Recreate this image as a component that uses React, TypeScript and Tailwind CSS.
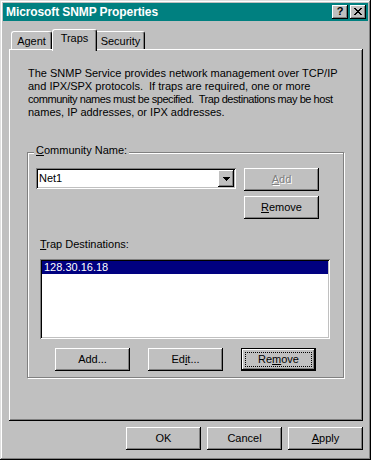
import React from "react";

const raised =
  "bg-[#c0c0c0] shadow-[inset_-1px_-1px_#000,inset_1px_1px_#fff,inset_-2px_-2px_#808080]";
const sunken =
  "bg-white shadow-[inset_1px_1px_#808080,inset_-1px_-1px_#fff,inset_2px_2px_#000,inset_-2px_-2px_#c0c0c0]";

function Btn({
  children,
  disabled,
  isDefault,
  className = "",
}: {
  children: React.ReactNode;
  disabled?: boolean;
  isDefault?: boolean;
  className?: string;
}) {
  if (isDefault) {
    return (
      <div
        className={`w-[75px] h-[23px] border border-black bg-[#c0c0c0] shadow-[inset_-1px_-1px_#000,inset_1px_1px_#fff,inset_-2px_-2px_#808080] p-[3px] ${className}`}
      >
        <div className="w-full h-full border border-dotted border-black flex items-center justify-center leading-none">
          {children}
        </div>
      </div>
    );
  }
  return (
    <div
      className={`w-[75px] h-[23px] ${raised} flex items-center justify-center leading-none ${
        disabled ? "text-[#808080] [text-shadow:1px_1px_#fff]" : "text-black"
      } ${className}`}
    >
      {children}
    </div>
  );
}

export default function App() {
  return (
    <div className="w-[371px] h-[460px] bg-[#c0c0c0] p-[3px] flex flex-col text-[11px] text-black font-['Liberation_Sans',Arial,sans-serif] shadow-[inset_-1px_-1px_#000,inset_1px_1px_#dfdfdf,inset_-2px_-2px_#808080,inset_2px_2px_#fff]">
      {/* title bar */}
      <div className="h-[18px] bg-[#008080] flex items-center justify-between pl-[3px] pr-[2px]">
        <span className="text-white font-bold text-[12px] leading-none tracking-[-0.1px]">
          Microsoft SNMP Properties
        </span>
        <div className="flex gap-[2px]">
          <div className={`w-[16px] h-[14px] ${raised} flex items-center justify-center font-bold text-[11px] leading-none pb-[1px]`}>
            ?
          </div>
          <div className={`w-[16px] h-[14px] ${raised} flex items-center justify-center pb-[1px]`}>
            <svg width="8" height="7" viewBox="0 0 8 7" shapeRendering="crispEdges">
              <path d="M0 0h2v1h1v1h2v-1h1v-1h2v1h-1v1h-1v1h-1v1h1v1h1v1h1v1h-2v-1h-1v-1h-2v1h-1v1h-2v-1h1v-1h1v-1h1v-1h-1v-1h-1v-1h-1z" fill="#000" />
            </svg>
          </div>
        </div>
      </div>

      <div className="pl-[6px] pr-[5px] flex flex-col">
        {/* tabs */}
        <div className="mt-[8px] h-[20px] flex items-end pl-[2px]">
          <div className="w-[41px] h-[18px] border-l border-t border-white border-r border-r-black rounded-t-[3px] shadow-[inset_-1px_0_#808080] flex justify-center pt-[3px] leading-[13px]">
            Agent
          </div>
          <div className="relative z-10 w-[45px] h-[22px] -mb-[2px] bg-[#c0c0c0] border-l border-t border-white border-r border-r-black rounded-t-[3px] shadow-[inset_-1px_0_#808080] flex justify-center pt-[2px] leading-[13px]">
            Traps
          </div>
          <div className="w-[48px] h-[18px] border-t border-white border-r border-r-black rounded-tr-[3px] shadow-[inset_-1px_0_#808080] flex justify-center pt-[3px] leading-[13px]">
            Security
          </div>
        </div>

        {/* panel */}
        <div className="relative w-[354px] h-[372px] bg-[#c0c0c0] shadow-[inset_-1px_-1px_#000,inset_1px_1px_#fff,inset_-2px_-2px_#808080] pt-[18px] px-[18px]">
          <div className="pl-[1px] leading-[13px] whitespace-pre">
            <div>The SNMP Service provides network management over TCP/IP</div>
            <div>{"and IPX/SPX protocols.  If traps are required, one or more"}</div>
            <div className="tracking-[-0.45px]">
              {"community names must be specified.  Trap destinations may be host"}
            </div>
            <div>names, IP addresses, or IPX addresses.</div>
          </div>

          {/* group box */}
          <div className="relative mt-[33px] w-[317px] h-[226px] border border-[#808080] shadow-[inset_1px_1px_#fff,1px_1px_#fff] pt-[15px] pl-[8px]">
            <span className="absolute left-[6px] top-[-9px] px-[2px] bg-[#c0c0c0] leading-[13px]">
              <span className="underline">C</span>ommunity Name:
            </span>

            <div className="flex gap-[8px]">
              <div className={`w-[200px] h-[21px] ${sunken} flex items-center pl-[2px] pr-[2px]`}>
                <span className="flex-1 pl-[1px] leading-none">Net1</span>
                <div className={`w-[16px] h-[17px] ${raised} flex items-center justify-center`}>
                  <svg width="7" height="4" viewBox="0 0 7 4" shapeRendering="crispEdges">
                    <path d="M0 0h7v1h-1v1h-1v1h-1v1h-1v-1h-1v-1h-1v-1h-1z" fill="#000" />
                  </svg>
                </div>
              </div>
              <div className="flex flex-col gap-[5px]">
                <Btn disabled>
                  <span className="underline">A</span>dd
                </Btn>
                <Btn>
                  <span className="underline">R</span>emove
                </Btn>
              </div>
            </div>

            <div className="mt-[19px] ml-[4px] leading-[13px]">
              <span className="underline">T</span>rap Destinations:
            </div>
            <div className={`mt-[8px] ml-[4px] w-[290px] h-[80px] ${sunken} p-[2px]`}>
              <div className="h-[13px] bg-[#000080] text-white pl-[2px] leading-[13px]">
                128.30.16.18
              </div>
            </div>

            <div className="mt-[9px] ml-[19px] flex gap-[18px]">
              <Btn>Add...</Btn>
              <Btn>
                Ed<span className="underline">i</span>t...
              </Btn>
              <Btn isDefault>
                Re<span className="underline">m</span>ove
              </Btn>
            </div>
          </div>
        </div>

        {/* dialog buttons */}
        <div className="mt-[6px] flex justify-end gap-[6px]">
          <Btn>OK</Btn>
          <Btn>Cancel</Btn>
          <Btn>
            <span className="underline">A</span>pply
          </Btn>
        </div>
      </div>
    </div>
  );
}
